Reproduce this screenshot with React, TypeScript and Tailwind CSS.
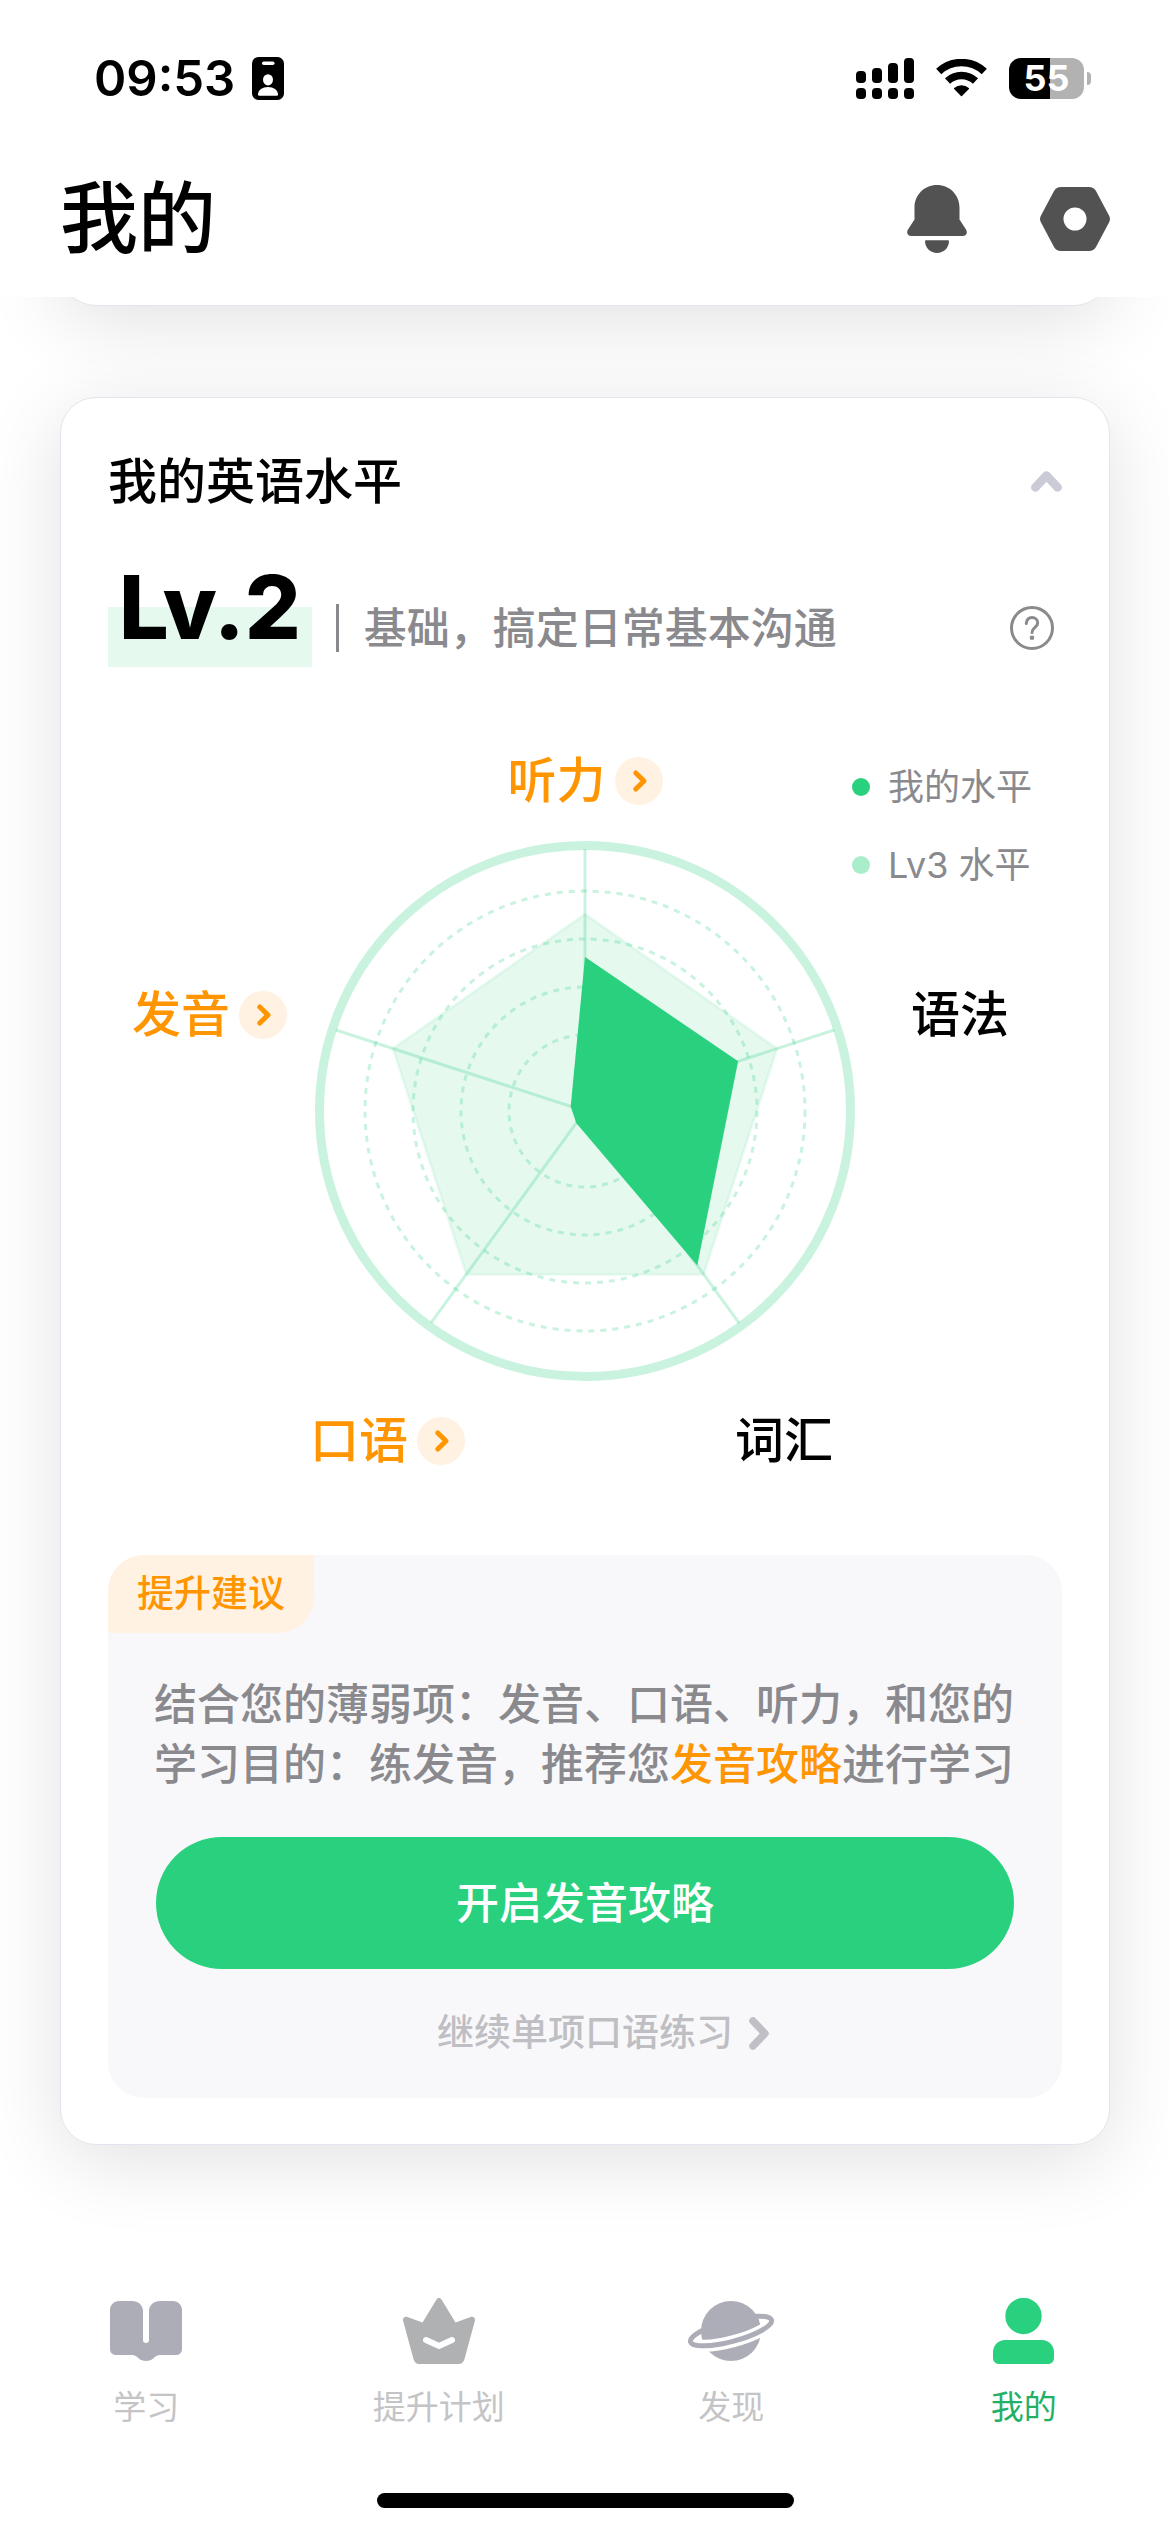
import type { ReactNode } from "react";

const GREEN = "#29d17e";

/** Point on a radar axis; axis 0 points up, axes run clockwise. */
function axisPoint(axis: number, radius: number): [number, number] {
  const angle = (axis * 72 * Math.PI) / 180;
  return [270 + radius * Math.sin(angle), 270 - radius * Math.cos(angle)];
}

function polygon(radii: number[]): string {
  return radii.map((r, i) => axisPoint(i, r).map((n) => n.toFixed(1)).join(",")).join(" ");
}

function SignalIcon() {
  const bars = [
    { x: 0, y: 13 },
    { x: 16, y: 10 },
    { x: 32, y: 5 },
    { x: 48, y: 0 },
  ];
  return (
    <svg width="58" height="41" viewBox="0 0 58 41" aria-hidden="true">
      {bars.map((b) => (
        <g key={b.x}>
          <rect x={b.x} y={b.y} width="10" height={25 - b.y} rx="4" />
          <rect x={b.x} y="30" width="10" height="11" rx="4" />
        </g>
      ))}
    </svg>
  );
}

function WifiIcon() {
  return (
    <svg width="51" height="38" viewBox="0 0 51 38" aria-hidden="true">
      <g fill="none" stroke="#000" strokeWidth="7.5">
        <path d="M2.7 12.5A33.5 33.5 0 0 1 48.3 12.5" />
        <path d="M11.5 22A20.5 20.5 0 0 1 39.5 22" />
      </g>
      <path
        d="M18.6 29.5A11 11 0 0 1 32.4 29.5L25.5 36.6Z"
        stroke="#000"
        strokeWidth="1.4"
        strokeLinejoin="round"
      />
    </svg>
  );
}

function BadgeIcon() {
  return (
    <svg width="32" height="43" viewBox="0 0 32 43" aria-hidden="true">
      <rect width="32" height="43" rx="6.5" />
      <rect x="10" y="4.5" width="12.5" height="3.4" rx="1.7" fill="#fff" />
      <ellipse cx="16" cy="22.8" rx="5" ry="5.6" fill="#fff" />
      <path d="M6 37.5C6 33 10.5 30 16 30S26 33 26 37.5Q26 38.8 24.8 38.8H7.2Q6 38.8 6 37.5Z" fill="#fff" />
    </svg>
  );
}

function Battery() {
  return (
    <div className="flex items-center gap-[3px]">
      <div className="flex h-[41px] w-[75px] items-center justify-center rounded-[12px] bg-[linear-gradient(to_right,#000_41px,#b2b2b2_41px)] text-[36px] leading-none font-bold text-white">
        55
      </div>
      <div className="h-[13px] w-1 rounded-r-full bg-[#b2b2b2]" />
    </div>
  );
}

function BellIcon() {
  return (
    <svg width="60" height="68" viewBox="0 0 60 68" fill="#525252" aria-hidden="true">
      <path d="M30 0C17.3 0 7.5 10 7.5 22.5V34.5L1 44.5C-1 48 .8 51 4.5 51H55.5C59.2 51 61 48 59 44.5L52.5 34.5V22.5C52.5 10 42.7 0 30 0Z" />
      <path d="M19 55.3H41Q42 55.3 42 56.5C41.8 63 36.5 68 30 68S18.2 63 18 56.5Q18 55.3 19 55.3Z" />
    </svg>
  );
}

function NutIcon() {
  return (
    <svg width="70" height="64" viewBox="0 0 70 64" fill="#525252" aria-hidden="true">
      <path
        fillRule="evenodd"
        d="M21 0H49C52 0 54.5 1.5 56 4L69 28.5C70.3 31 70.3 33 69 35.5L56 60C54.5 62.5 52 64 49 64H21C18 64 15.5 62.5 14 60L1 35.5C-.3 33 -.3 31 1 28.5L14 4C15.5 1.5 18 0 21 0ZM35 20.5A11.5 11.5 0 1 0 35 43.5A11.5 11.5 0 1 0 35 20.5Z"
      />
    </svg>
  );
}

function HelpIcon() {
  return (
    <svg width="44" height="44" viewBox="0 0 44 44" fill="none" stroke="#8a8a8e" strokeWidth="3" aria-hidden="true">
      <circle cx="22" cy="22" r="20.5" />
      <path d="M16.3 17.5C16.3 13.8 18.8 11.5 22 11.5S27.7 13.8 27.7 17C27.7 21.5 22 21.5 22 26.5" strokeLinecap="round" />
      <circle cx="22" cy="31.8" r="2.3" fill="#8a8a8e" stroke="none" />
    </svg>
  );
}

function BookIcon() {
  return (
    <svg width="72" height="66" viewBox="0 -3 72 66" fill="#adadb8" aria-hidden="true">
      <path d="M9 0H22C28 0 33 4 33 10V39a3 3 0 0 0 6 0V10C39 4 44 0 50 0H63c5 0 9 4 9 9V48c0 3.5-2.5 6-6 6H50c-3 0-4.5 1.5-6.5 3.2C41.5 59 39 60 36 60s-5.5-1-7.5-2.8C26.5 55.5 25 54 22 54H6c-3.5 0-6-2.5-6-6V9C0 4 4 0 9 0Z" />
    </svg>
  );
}

function CrownIcon() {
  return (
    <svg width="72" height="66" viewBox="0 0 72 66" fill="#b0b1b3" aria-hidden="true">
      <path d="M33.5 1.5C34.5-.5 37.5-.5 38.5 1.5L52.5 24.5L67.5 19C70.5 18 72.3 20 72 22.5L61.5 61C60.7 64 58.5 66 56 66H16C13.5 66 11.3 64 10.5 61L0 22.5C-.3 20 1.5 18 4.5 19L19.5 24.5Z" />
      <path d="M23 42L36 48L49 42" fill="none" stroke="#fff" strokeWidth="6" strokeLinecap="round" />
    </svg>
  );
}

function PlanetIcon() {
  return (
    <svg width="88" height="66" viewBox="0 -3 88 66" fill="none" aria-hidden="true">
      <circle cx="44" cy="30" r="30" fill="#adadb8" />
      <g transform="rotate(-15 44 30)">
        <path d="M86 30A42 10.5 0 0 1 2 30" stroke="#fff" strokeWidth="12" />
        <ellipse cx="44" cy="30" rx="42" ry="10.5" stroke="#adadb8" strokeWidth="5" />
      </g>
    </svg>
  );
}

function PersonIcon() {
  return (
    <svg width="61" height="66" viewBox="0 0 61 66" fill={GREEN} aria-hidden="true">
      <circle cx="30.5" cy="18" r="18.2" />
      <path d="M12 42H49C55.5 42 61 47.5 61 54V60C61 63.5 58.5 66 55 66H6C2.5 66 0 63.5 0 60V54C0 47.5 5.5 42 12 42Z" />
    </svg>
  );
}

function SkillButton({ name }: { name: string }) {
  return (
    <button type="button" className="flex h-12 items-center gap-[9px] text-[49px] leading-[48px] font-medium whitespace-nowrap text-[#ff9500]">
      {name}
      <svg width="48" height="48" viewBox="0 0 48 48" aria-hidden="true">
        <circle cx="24" cy="24" r="24" fill="#fff2e2" />
        <path d="M20.8 16L29 24L20.8 32" fill="none" stroke="#ff9500" strokeWidth="5" strokeLinecap="round" strokeLinejoin="round" />
      </svg>
    </button>
  );
}

function RadarChart() {
  return (
    <svg viewBox="0 0 540 540" className="w-full" role="img" aria-label="英语水平雷达图">
      <g fill="none" stroke={GREEN} strokeOpacity="0.25">
        <circle cx="270" cy="270" r="265.5" strokeWidth="9" />
        {[76, 124, 172, 220].map((r) => (
          <circle key={r} cx="270" cy="270" r={r} strokeWidth="3" strokeDasharray="6 6" />
        ))}
        {[0, 1, 2, 3, 4].map((axis) => {
          const [x, y] = axisPoint(axis, 262);
          return <line key={axis} x1="270" y1="270" x2={x} y2={y} strokeWidth="3" />;
        })}
      </g>
      <polygon points={polygon([197, 202, 202, 202, 202])} fill={GREEN} fillOpacity="0.12" stroke={GREEN} strokeOpacity="0.08" strokeWidth="3" />
      <polygon points={polygon([154, 161, 191, 15, 15])} fill={GREEN} />
    </svg>
  );
}

function LegendItem({ dot, children }: { dot: string; children: ReactNode }) {
  return (
    <li className="flex h-12 items-center gap-[18px]">
      <span className={`size-[18px] rounded-full ${dot}`} />
      {children}
    </li>
  );
}

function NavItem({ icon, label, active }: { icon: ReactNode; label: string; active?: boolean }) {
  return (
    <a
      href="#"
      aria-current={active ? "page" : undefined}
      className={`flex flex-1 flex-col items-center gap-[19px] text-[33px] leading-[48px] ${active ? "text-[#22b066]" : "text-[#c4c4c6]"}`}
    >
      {icon}
      {label}
    </a>
  );
}

export default function App() {
  return (
    <div lang="zh-CN" className="flex min-h-screen flex-col bg-white font-['Inter','Noto_Sans_CJK_SC',sans-serif] text-black">
      <header className="pb-[18px]">
        <div className="flex h-[156px] items-center justify-between pr-[79px] pl-[94px]">
          <div className="flex items-center gap-[17px] text-[49px] leading-none font-semibold">
            09:53
            <BadgeIcon />
          </div>
          <div className="flex items-center gap-[22px]">
            <SignalIcon />
            <WifiIcon />
            <Battery />
          </div>
        </div>
        <div className="flex h-[125px] items-center justify-between px-[60px]">
          <h1 className="text-[78px] leading-none font-medium">我的</h1>
          <div className="flex items-center gap-[73px]">
            <button type="button" aria-label="通知">
              <BellIcon />
            </button>
            <button type="button" aria-label="设置">
              <NutIcon />
            </button>
          </div>
        </div>
      </header>

      <main className="-mt-0.5 flex-1 overflow-hidden px-[60px] pb-24">
        <div className="-mt-[151px] h-[160px] rounded-b-[36px] border border-[#e4e4ee] bg-white shadow-[0_15px_80px_rgba(0,0,0,0.12)]" />

        <section className="mt-[91px] rounded-[36px] border border-[#e4e4ee] bg-white px-[47px] pt-[53px] pb-[46px] shadow-[0_15px_80px_rgba(0,0,0,0.12)]">
          <div className="flex h-[60px] items-center justify-between">
            <h2 className="text-[49px] leading-none font-medium">我的英语水平</h2>
            <button type="button" aria-label="收起">
              <svg width="31" height="21" viewBox="0 0 31 21" fill="none" stroke="#cbcbd7" strokeWidth="8.5" strokeLinecap="round" strokeLinejoin="round" aria-hidden="true">
                <path d="M4.3 16.5L15.5 4.5L26.7 16.5" />
              </svg>
            </button>
          </div>

          <div className="mt-9 flex items-end">
            <strong className="bg-[linear-gradient(to_top,#e5f9ef_60px,transparent_60px)] px-[11px] text-[88px] leading-[120px] font-extrabold">
              Lv.2
            </strong>
            <div className="mb-[9px] ml-6 flex h-[60px] flex-1 items-center text-[43px] whitespace-nowrap text-[#8a8a8e]">
              <span className="h-12 w-[3px] bg-[#8a8a8e]" />
              <p className="ml-[25px] flex-1 font-medium">基础，搞定日常基本沟通</p>
              <button type="button" aria-label="帮助" className="mr-2">
                <HelpIcon />
              </button>
            </div>
          </div>

          <div className="relative mt-[90px]">
            <div className="flex justify-center">
              <SkillButton name="听力" />
            </div>
            <div className="mt-9 grid grid-cols-[1fr_540px_1fr]">
              <div className="pt-[150px] pl-6">
                <SkillButton name="发音" />
              </div>
              <RadarChart />
              <p className="pt-[150px] pl-14 text-[49px] leading-[48px] font-medium">语法</p>
            </div>
            <div className="mt-9 grid grid-cols-2">
              <div className="flex justify-end pr-[120px]">
                <SkillButton name="口语" />
              </div>
              <p className="pl-[150px] text-[49px] leading-[48px] font-medium">词汇</p>
            </div>
            <ul className="absolute top-[6px] right-[30px] flex flex-col gap-[30px] text-[36px] whitespace-nowrap text-[#8a8a8e]">
              <LegendItem dot="bg-[#29d17e]">我的水平</LegendItem>
              <LegendItem dot="bg-[#a9edcb]">Lv3 水平</LegendItem>
            </ul>
          </div>

          <div className="mt-[90px] rounded-[36px] bg-[#f8f8fb] pb-[41px]">
            <h3 className="w-fit rounded-tl-[36px] rounded-br-[36px] bg-[#fff2e2] px-[29px] text-[37px] leading-[78px] font-medium text-[#ff9500]">
              提升建议
            </h3>
            <p className="mt-[41px] px-[46px] text-[43px] leading-[60px] font-medium text-[#8a8a8e]">
              结合您的薄弱项：发音、口语、听力，和您的学习目的：练发音，推荐您<span className="text-[#ff9500]">发音攻略</span>进行学习
            </p>
            <div className="mt-[43px] px-12">
              <button type="button" className="h-[132px] w-full rounded-full bg-[#29d17e] text-[43px] font-medium text-white">
                开启发音攻略
              </button>
            </div>
            <a href="#" className="mt-10 flex h-12 items-center justify-center gap-4 pl-9 text-[37px] font-medium text-[#bfbfc3]">
              继续单项口语练习
              <svg width="20" height="33" viewBox="0 0 20 33" fill="none" stroke="#bfbfc5" strokeWidth="7.5" strokeLinecap="round" strokeLinejoin="round" aria-hidden="true">
                <path d="M4 4L16 16.5L4 29" />
              </svg>
            </a>
          </div>
        </section>
      </main>

      <nav className="pt-[15px] pb-6">
        <div className="flex">
          <NavItem icon={<BookIcon />} label="学习" />
          <NavItem icon={<CrownIcon />} label="提升计划" />
          <NavItem icon={<PlanetIcon />} label="发现" />
          <NavItem icon={<PersonIcon />} label="我的" active />
        </div>
        <div className="mx-auto mt-[62px] h-[15px] w-[417px] rounded-full bg-black" />
      </nav>
    </div>
  );
}
